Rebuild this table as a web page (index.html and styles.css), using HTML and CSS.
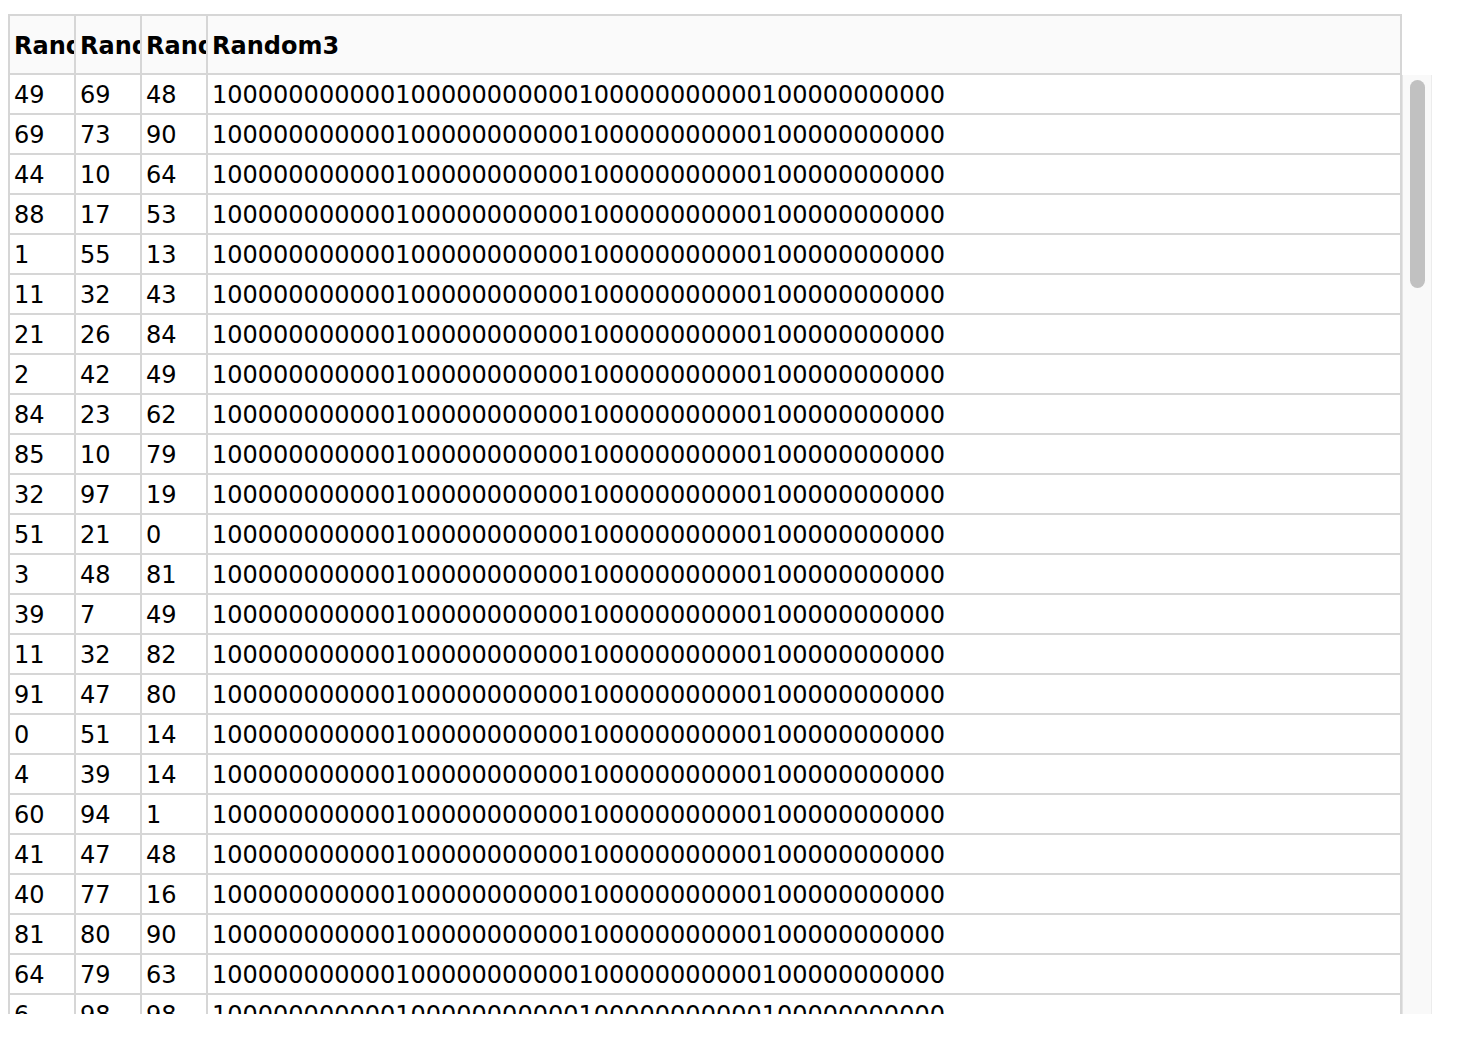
FILE: index.html
```html
<!DOCTYPE html>
<html>
<head>
<meta charset="utf-8">
<link rel="stylesheet" href="styles.css">
</head>
<body>
<div class="grid-wrap">
  <div class="head">
    <div class="hc">Random0</div>
    <div class="hc">Random1</div>
    <div class="hc">Random2</div>
    <div class="hc last">Random3</div>
  </div>
  <div class="body">
    <div class="rows">
      <div class="r"><span>49</span><span>69</span><span>48</span><span>100000000000100000000000100000000000100000000000</span></div>
      <div class="r"><span>69</span><span>73</span><span>90</span><span>100000000000100000000000100000000000100000000000</span></div>
      <div class="r"><span>44</span><span>10</span><span>64</span><span>100000000000100000000000100000000000100000000000</span></div>
      <div class="r"><span>88</span><span>17</span><span>53</span><span>100000000000100000000000100000000000100000000000</span></div>
      <div class="r"><span>1</span><span>55</span><span>13</span><span>100000000000100000000000100000000000100000000000</span></div>
      <div class="r"><span>11</span><span>32</span><span>43</span><span>100000000000100000000000100000000000100000000000</span></div>
      <div class="r"><span>21</span><span>26</span><span>84</span><span>100000000000100000000000100000000000100000000000</span></div>
      <div class="r"><span>2</span><span>42</span><span>49</span><span>100000000000100000000000100000000000100000000000</span></div>
      <div class="r"><span>84</span><span>23</span><span>62</span><span>100000000000100000000000100000000000100000000000</span></div>
      <div class="r"><span>85</span><span>10</span><span>79</span><span>100000000000100000000000100000000000100000000000</span></div>
      <div class="r"><span>32</span><span>97</span><span>19</span><span>100000000000100000000000100000000000100000000000</span></div>
      <div class="r"><span>51</span><span>21</span><span>0</span><span>100000000000100000000000100000000000100000000000</span></div>
      <div class="r"><span>3</span><span>48</span><span>81</span><span>100000000000100000000000100000000000100000000000</span></div>
      <div class="r"><span>39</span><span>7</span><span>49</span><span>100000000000100000000000100000000000100000000000</span></div>
      <div class="r"><span>11</span><span>32</span><span>82</span><span>100000000000100000000000100000000000100000000000</span></div>
      <div class="r"><span>91</span><span>47</span><span>80</span><span>100000000000100000000000100000000000100000000000</span></div>
      <div class="r"><span>0</span><span>51</span><span>14</span><span>100000000000100000000000100000000000100000000000</span></div>
      <div class="r"><span>4</span><span>39</span><span>14</span><span>100000000000100000000000100000000000100000000000</span></div>
      <div class="r"><span>60</span><span>94</span><span>1</span><span>100000000000100000000000100000000000100000000000</span></div>
      <div class="r"><span>41</span><span>47</span><span>48</span><span>100000000000100000000000100000000000100000000000</span></div>
      <div class="r"><span>40</span><span>77</span><span>16</span><span>100000000000100000000000100000000000100000000000</span></div>
      <div class="r"><span>81</span><span>80</span><span>90</span><span>100000000000100000000000100000000000100000000000</span></div>
      <div class="r"><span>64</span><span>79</span><span>63</span><span>100000000000100000000000100000000000100000000000</span></div>
      <div class="r"><span>6</span><span>98</span><span>98</span><span>100000000000100000000000100000000000100000000000</span></div>
      <div class="r"><span>27</span><span>5</span><span>33</span><span>100000000000100000000000100000000000100000000000</span></div>
    </div>
    <div class="sb" aria-hidden="true"><div class="thumb"></div></div>
  </div>
</div>
</body>
</html>
```

FILE: styles.css
```css
html, body {
  margin: 0;
  padding: 0;
  background: #ffffff;
}

body {
  font-family: "DejaVu Sans", Verdana, sans-serif;
  font-size: 24px;
  color: #000000;
}

.grid-wrap {
  padding: 14px 0 0 8px;
  width: 1424px;
}

.head {
  width: 1394px;
  box-sizing: border-box;
  display: grid;
  grid-template-columns: 66px 66px 66px 1fr;
  border: 2px solid #d6d6d6;
  background: #fafafa;
  height: 61px;
}

.hc {
  box-sizing: border-box;
  border-right: 2px solid #d6d6d6;
  overflow: hidden;
  white-space: nowrap;
  font-weight: bold;
  padding: 4px 0 0 4px;
  line-height: 53px;
}

.hc.last {
  border-right: none;
}

.body {
  display: flex;
  height: 939px;
  overflow: hidden;
}

.rows {
  width: 1394px;
  flex: none;
}

.r {
  box-sizing: border-box;
  display: grid;
  grid-template-columns: 66px 66px 66px 1fr;
  border-left: 2px solid #d6d6d6;
  border-right: 2px solid #d6d6d6;
  border-bottom: 2px solid #d6d6d6;
  height: 40px;
}

.r span {
  box-sizing: border-box;
  border-right: 2px solid #d6d6d6;
  overflow: hidden;
  white-space: nowrap;
  padding: 3px 0 0 4px;
  line-height: 35px;
}

.r span:last-child {
  border-right: none;
}

.sb {
  width: 30px;
  flex: none;
  box-sizing: border-box;
  background: #f9f9f9;
  border-left: 1px solid #e4e4e4;
  border-right: 1px solid #ececec;
  padding: 5px 6px 0 7px;
}

.thumb {
  height: 208px;
  background: #c1c1c1;
  border-radius: 8px;
}
```
